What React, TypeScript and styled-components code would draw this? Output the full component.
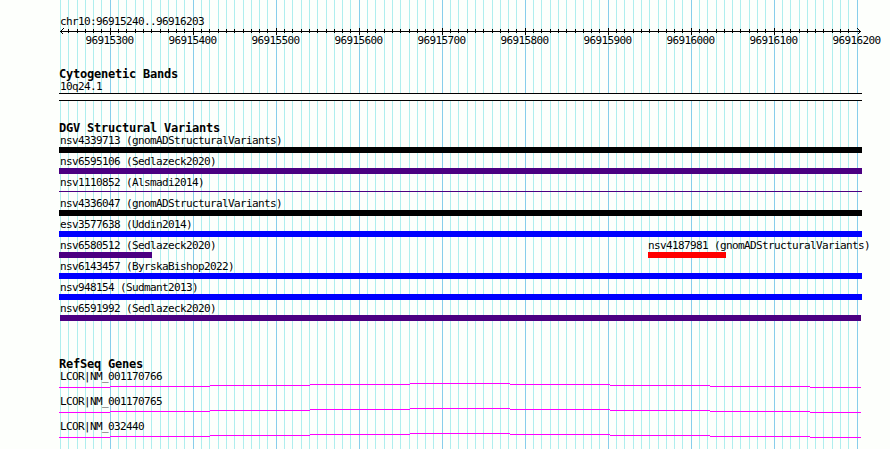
import React from 'react'
import styled, { createGlobalStyle } from 'styled-components'

const GlobalStyle = createGlobalStyle`
  body {
    margin: 0;
    background-color: #fdfffc;
  }
`

const Panel = styled.main`
  position: relative;
  width: 890px;
  height: 449px;
  overflow: hidden;
  color: #000;
  font: 11px 'DejaVu Sans Mono', monospace;
  line-height: 12px;
  letter-spacing: -0.622px;
  white-space: pre;
`

const Backdrop = styled.svg`
  position: absolute;
  top: 0;
  left: 0;
`

const Content = styled.div`
  position: relative;
  display: flex;
  flex-direction: column;
  padding: 15px 0 0 59px;
`

const Label = styled.div<{ $indent?: number }>`
  box-sizing: border-box;
  height: 12px;
  padding-top: 1px;
  padding-left: ${({ $indent = 1 }) => $indent}px;
`

const RulerTrack = styled.section`
  height: 53px;
`

const RulerLine = styled.svg`
  display: block;
  margin-top: 1px;
`

const RulerLabels = styled.div`
  display: flex;
  padding-left: 26.5px;
`

const RulerLabel = styled.span`
  flex: none;
  width: 83px;
`

const TrackTitle = styled.h2`
  height: 12px;
  margin: 0;
  font-size: 12px;
  font-weight: 700;
  line-height: 12px;
  letter-spacing: -0.224px;
`

const BandTrack = styled.section`
  height: 54px;
`

const Band = styled.div`
  box-sizing: border-box;
  width: 803px;
  height: 8px;
  margin-top: 1px;
  border: solid #000;
  border-width: 1px 0;
  background-color: #fdfffc;
`

const VariantTrack = styled.section`
  height: 236px;
`

const VariantRow = styled.div`
  display: flex;
  height: 21px;
`

const Variant = styled.div<{ $width: number; $gap?: number }>`
  flex: none;
  width: ${({ $width }) => $width}px;
  margin-left: ${({ $gap = 0 }) => $gap}px;
`

const Bar = styled.div<{ $color: string; $thin?: boolean }>`
  height: ${({ $thin }) => ($thin ? 1 : 6)}px;
  margin-top: ${({ $thin }) => ($thin ? 3 : 1)}px;
  background-color: ${({ $color }) => $color};
`

const GeneRow = styled.div`
  height: 25px;
`

const GeneLine = styled.svg`
  display: block;
  margin-top: 1px;
`

const gridLines = Array.from({ length: 97 }, (_, i) => ({
  x: Math.floor(60.476 + 8.299 * i),
  major: i % 10 === 6,
}))

const rulerLabels = Array.from({ length: 10 }, (_, i) => String(96915300 + i * 100))

interface VariantData {
  label: string
  color: string
  width: number
  gap?: number
  indent?: number
  thin?: boolean
}

const variantRows: VariantData[][] = [
  [{ label: 'nsv4339713 (gnomADStructuralVariants)', color: '#000', width: 803 }],
  [{ label: 'nsv6595106 (Sedlazeck2020)', color: '#4b0082', width: 803 }],
  [{ label: 'nsv1110852 (Alsmadi2014)', color: '#4b0082', width: 803, thin: true }],
  [{ label: 'nsv4336047 (gnomADStructuralVariants)', color: '#000', width: 803 }],
  [{ label: 'esv3577638 (Uddin2014)', color: '#00f', width: 803 }],
  [
    { label: 'nsv6580512 (Sedlazeck2020)', color: '#4b0082', width: 93 },
    { label: 'nsv4187981 (gnomADStructuralVariants)', color: '#f00', width: 78, gap: 496, indent: 0 },
  ],
  [{ label: 'nsv6143457 (ByrskaBishop2022)', color: '#00f', width: 803 }],
  [{ label: 'nsv948154 (Sudmant2013)', color: '#00f', width: 803 }],
  [{ label: 'nsv6591992 (Sedlazeck2020)', color: '#4b0082', width: 801, gap: 1, indent: 0 }],
]

const genes = ['LCOR|NM_001170766', 'LCOR|NM_001170765', 'LCOR|NM_032440']

const genePath =
  'M0 4.5H51M51 3.5H151M151 2.5H251M251 1.5H351M351 0.5H451M451 1.5H551M551 2.5H651M651 3.5H751M751 4.5H802'

function Grid() {
  return (
    <Backdrop width='890' height='449' shapeRendering='crispEdges'>
      {gridLines.map(({ x, major }) => (
        <rect key={x} x={x} width='1' height='449' fill={major ? '#87ceeb' : '#afeeee'} />
      ))}
    </Backdrop>
  )
}

function Ruler() {
  return (
    <RulerTrack>
      <Label>chr10:96915240..96916203</Label>
      <RulerLine width='803' height='7' shapeRendering='crispEdges'>
        <rect x='1' y='3' width='801' height='1' />
        {gridLines.slice(1, -1).map(({ x, major }) => (
          <rect key={x} x={x - 59} y={major ? 0 : 1} width='1' height={major ? 7 : 4} />
        ))}
        <path d='M4.5 0.5L1.5 3.5L4.5 6.5M798.5 0.5L801.5 3.5L798.5 6.5' fill='none' stroke='#000' />
      </RulerLine>
      <RulerLabels>
        {rulerLabels.map(label => (
          <RulerLabel key={label}>{label}</RulerLabel>
        ))}
      </RulerLabels>
    </RulerTrack>
  )
}

function App() {
  return (
    <Panel>
      <GlobalStyle />
      <Grid />

      <Content>
        <Ruler />

        <BandTrack>
          <TrackTitle>Cytogenetic Bands</TrackTitle>
          <Label>10q24.1</Label>
          <Band />
        </BandTrack>

        <VariantTrack>
          <TrackTitle>DGV Structural Variants</TrackTitle>
          {variantRows.map(row => (
            <VariantRow key={row[0].label}>
              {row.map(({ label, color, width, gap, indent, thin }) => (
                <Variant key={label} $width={width} $gap={gap}>
                  <Label $indent={indent}>{label}</Label>
                  <Bar $color={color} $thin={thin} />
                </Variant>
              ))}
            </VariantRow>
          ))}
        </VariantTrack>

        <section>
          <TrackTitle>RefSeq Genes</TrackTitle>
          {genes.map(gene => (
            <GeneRow key={gene}>
              <Label>{gene}</Label>
              <GeneLine width='803' height='6' shapeRendering='crispEdges'>
                <path d={genePath} stroke='#f0f' />
              </GeneLine>
            </GeneRow>
          ))}
        </section>
      </Content>
    </Panel>
  )
}

export default App
